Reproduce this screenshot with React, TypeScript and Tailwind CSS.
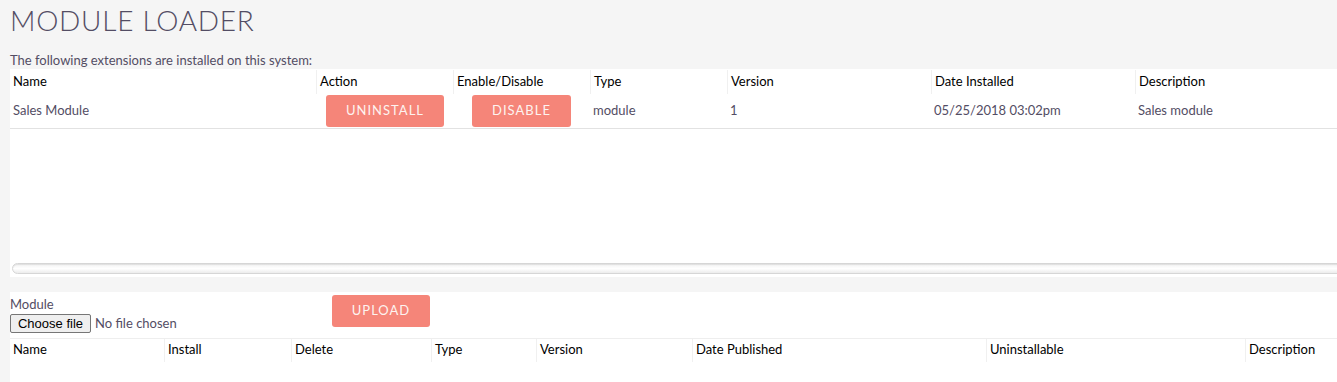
const font = { fontFamily: "Lato, 'Open Sans', sans-serif" };

const installedCols = [
  { label: "Name", w: "w-[306px]" },
  { label: "Action", w: "w-[137px]" },
  { label: "Enable/Disable", w: "w-[137px]" },
  { label: "Type", w: "w-[137px]" },
  { label: "Version", w: "w-[204px]" },
  { label: "Date Installed", w: "w-[204px]" },
  { label: "Description", w: "flex-1" },
];

const uploadCols = [
  { label: "Name", w: "w-[154px]" },
  { label: "Install", w: "w-[127px]" },
  { label: "Delete", w: "w-[140px]" },
  { label: "Type", w: "w-[105px]" },
  { label: "Version", w: "w-[156px]" },
  { label: "Date Published", w: "w-[294px]" },
  { label: "Uninstallable", w: "w-[259px]" },
  { label: "Description", w: "flex-1" },
];

function HeaderRow({ cols, h }: { cols: { label: string; w: string }[]; h: string }) {
  return (
    <div className={`flex ${h} items-center text-[13px] text-black`}>
      {cols.map((c, i) => (
        <div
          key={c.label + i}
          className={`${c.w} flex h-full items-center pl-[3px] ${i > 0 ? "border-l border-[#f0f0f0]" : ""}`}
        >
          {c.label}
        </div>
      ))}
    </div>
  );
}

function PinkButton({ children, className = "" }: { children: React.ReactNode; className?: string }) {
  return (
    <button
      className={`h-[32px] rounded-[3px] bg-[#f58579] text-[13px] tracking-[1px] text-[#fdf3f0] uppercase ${className}`}
    >
      {children}
    </button>
  );
}

export default function App() {
  return (
    <div className="h-[382px] w-[1337px] overflow-hidden bg-[#f5f5f5] pl-[10px]" style={font}>
      <h1 className="pt-[4px] text-[28px] leading-[1.2] font-light tracking-[0.75px] text-[#534d64]">
        MODULE LOADER
      </h1>
      <p className="mt-[14px] text-[13px] leading-[16px] text-[#534d64]">
        The following extensions are installed on this system:
      </p>

      <div className="mt-[1px] flex h-[208px] flex-col bg-white">
        <div className="pt-[1px]">
          <HeaderRow cols={installedCols} h="h-[24px]" />
        </div>
        <div className="flex h-[35px] items-center border-b border-[#e2e2e2] text-[13px] text-[#534d64]">
          <div className="w-[306px] pt-[1px] pl-[3px]">Sales Module</div>
          <div className="w-[137px] pl-[10px]">
            <PinkButton className="w-[118px]">Uninstall</PinkButton>
          </div>
          <div className="w-[137px] pl-[19px]">
            <PinkButton className="w-[99px]">Disable</PinkButton>
          </div>
          <div className="w-[137px] pt-[1px] pl-[3px]">module</div>
          <div className="w-[204px] pt-[1px] pl-[3px]">1</div>
          <div className="w-[204px] pt-[1px] pl-[3px]">05/25/2018 03:02pm</div>
          <div className="flex-1 pt-[1px] pl-[3px]">Sales module</div>
        </div>
        <div className="flex-1" />
        <div className="mr-[-20px] mb-[3px] ml-[2px] h-[11px] rounded-full border border-[#d6d6d6] bg-gradient-to-b from-[#f2f2f2] via-white to-[#ececec] shadow-[inset_0_1px_1px_rgba(0,0,0,0.08)]" />
      </div>

      <div className="mt-[15px] h-[100px] bg-white">
        <div className="flex h-[46px]">
          <div className="w-[322px] pt-[4px]">
            <div className="text-[13px] leading-[16px] text-[#534d64]">Module</div>
            <div className="mt-[2px] flex items-center">
              <button
                className="h-[19px] w-[81px] rounded-[2px] border border-[#767676] bg-[#efefef] text-[13px] leading-none text-black"
                style={{ fontFamily: "'Liberation Sans', Arial, sans-serif" }}
              >
                Choose file
              </button>
              <span className="ml-[4px] text-[13px] text-[#534d64]">No file chosen</span>
            </div>
          </div>
          <div className="pt-[3px]">
            <PinkButton className="w-[98px]">Upload</PinkButton>
          </div>
        </div>
        <div className="border-t border-[#eeeeee]">
          <HeaderRow cols={uploadCols} h="h-[23px]" />
        </div>
      </div>
    </div>
  );
}
